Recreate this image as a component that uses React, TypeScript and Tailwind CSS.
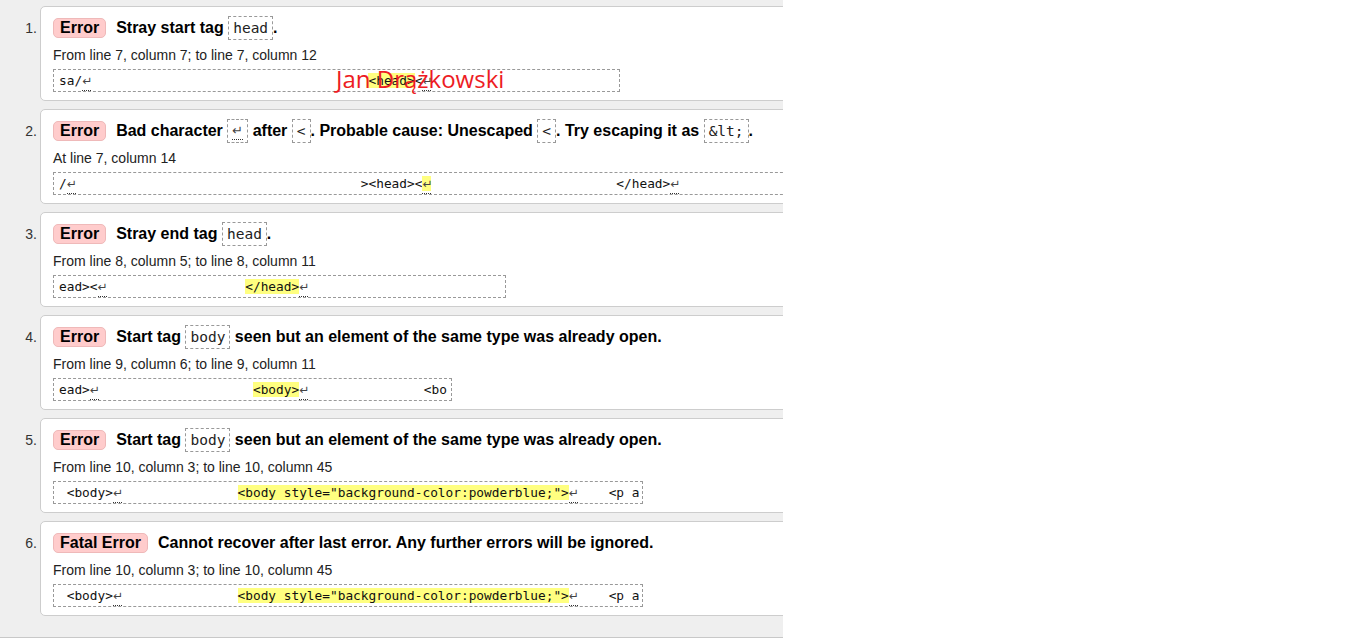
import React from "react";

type Seg = { t: string; hl?: boolean };

type Issue = {
  kind: string;
  title: React.ReactNode;
  where: string;
  extract: Seg[];
  boxWidth: string;
};

const sp = (n: number) => " ".repeat(n);

// renders a piece of extract text, marking each ↵ like the validator does
const renderText = (text: string, key: string) => {
  const parts = text.split("↵");
  const out: React.ReactNode[] = [];
  parts.forEach((p, i) => {
    if (p) out.push(<span key={`${key}-t${i}`}>{p}</span>);
    if (i < parts.length - 1)
      out.push(
        <span
          key={`${key}-lf${i}`}
          className="inline-block w-[9px] border-b border-dotted border-[#333] font-['DejaVu_Sans',sans-serif] text-[12px] leading-[17px] text-[#444]"
        >
          ↵
        </span>,
      );
  });
  return out;
};

const Code = ({ children }: { children: React.ReactNode }) => (
  <code className="inline-block border border-dashed border-[#999] bg-white px-[4px] align-middle font-['DejaVu_Sans_Mono',monospace] text-[14.5px] font-normal leading-[22px] text-[#222]">
    {children}
  </code>
);

const LfCode = () => (
  <code className="inline-block border border-dashed border-[#999] bg-white px-[4px] align-middle font-['DejaVu_Sans',sans-serif] text-[13px] font-normal leading-[22px] text-[#444]">
    <span className="inline-block border-b border-dotted border-[#333] leading-[17px]">
      ↵
    </span>
  </code>
);

const issues: Issue[] = [
  {
    kind: "Error",
    title: (
      <>
        Stray start tag <Code>head</Code>.
      </>
    ),
    where: "From line 7, column 7; to line 7, column 12",
    extract: [
      { t: "sa/↵" + sp(36) },
      { t: "<head>", hl: true },
      { t: "<↵" },
    ],
    boxWidth: "w-[567px]",
  },
  {
    kind: "Error",
    title: (
      <>
        Bad character <LfCode /> after <Code>&lt;</Code>. Probable cause:
        Unescaped <Code>&lt;</Code>. Try escaping it as <Code>&amp;lt;</Code>.
      </>
    ),
    where: "At line 7, column 14",
    extract: [
      { t: "/↵" + sp(37) + "><head><" },
      { t: "↵", hl: true },
      { t: sp(24) + "</head>↵" },
    ],
    boxWidth: "w-[760px]",
  },
  {
    kind: "Error",
    title: (
      <>
        Stray end tag <Code>head</Code>.
      </>
    ),
    where: "From line 8, column 5; to line 8, column 11",
    extract: [
      { t: "ead><↵" + sp(18) },
      { t: "</head>", hl: true },
      { t: "↵" },
    ],
    boxWidth: "w-[453px]",
  },
  {
    kind: "Error",
    title: (
      <>
        Start tag <Code>body</Code> seen but an element of the same type was
        already open.
      </>
    ),
    where: "From line 9, column 6; to line 9, column 11",
    extract: [
      { t: "ead>↵" + sp(20) },
      { t: "<body>", hl: true },
      { t: "↵" + sp(15) + "<bo" },
    ],
    boxWidth: "w-[399px]",
  },
  {
    kind: "Error",
    title: (
      <>
        Start tag <Code>body</Code> seen but an element of the same type was
        already open.
      </>
    ),
    where: "From line 10, column 3; to line 10, column 45",
    extract: [
      { t: " <body>↵" + sp(15) },
      { t: '<body style="background-color:powderblue;">', hl: true },
      { t: "↵" + sp(4) + "<p a" },
    ],
    boxWidth: "w-[590px]",
  },
  {
    kind: "Fatal Error",
    title: (
      <>Cannot recover after last error. Any further errors will be ignored.</>
    ),
    where: "From line 10, column 3; to line 10, column 45",
    extract: [
      { t: " <body>↵" + sp(15) },
      { t: '<body style="background-color:powderblue;">', hl: true },
      { t: "↵" + sp(4) + "<p a" },
    ],
    boxWidth: "w-[590px]",
  },
];

const App = () => {
  return (
    <div className="min-h-[639px] w-full bg-white font-['Liberation_Sans',Arial,sans-serif] text-[#222]">
      <div className="relative h-[638px] w-[783px] overflow-hidden border-b border-[#c8c8c8] bg-[#efefef] pt-[6px]">
        <ol className="flex flex-col gap-[8px]">
          {issues.map((issue, i) => (
            <li key={i} className="flex">
              <div className="w-[40px] shrink-0 pt-[10px] pr-[3px] text-right text-[14px] leading-[24px] text-[#333]">
                {i + 1}.
              </div>
              <div className="w-[800px] shrink-0 rounded-l-[5px] border border-[#cdcdcd] bg-white pt-[9px] pr-3 pb-[8px] pl-[12px]">
                <div className="flex h-[24px] items-center">
                  <span className="flex h-[20px] items-center rounded-[5px] border border-[#efb9b9] bg-[#fcc] px-[6px] text-[16px] leading-[18px] font-bold text-black">
                    {issue.kind}
                  </span>
                  <span className="ml-[10px] text-[16px] leading-[24px] font-bold whitespace-nowrap text-black">
                    {issue.title}
                  </span>
                </div>
                <div className="mt-[5px] text-[14px] leading-[20px] text-[#222]">
                  {issue.where}
                </div>
                <div
                  className={`mt-[4px] h-[23px] ${issue.boxWidth} overflow-hidden border border-dashed border-[#999] pl-[5px] font-['DejaVu_Sans_Mono',monospace] text-[12.8px] leading-[21px] whitespace-pre text-[#111]`}
                >
                  {issue.extract.map((s, j) =>
                    s.hl ? (
                      <span key={j} className="bg-[#ffff80]">
                        {renderText(s.t, `${i}-${j}`)}
                      </span>
                    ) : (
                      <React.Fragment key={j}>
                        {renderText(s.t, `${i}-${j}`)}
                      </React.Fragment>
                    ),
                  )}
                </div>
              </div>
            </li>
          ))}
        </ol>
        <div className="pointer-events-none absolute top-[64px] left-[336px] font-['Open_Sans',sans-serif] text-[24px] leading-[30px] text-[#ed1c24]">
          Jan Drążkowski
        </div>
      </div>
    </div>
  );
};

export default App;
